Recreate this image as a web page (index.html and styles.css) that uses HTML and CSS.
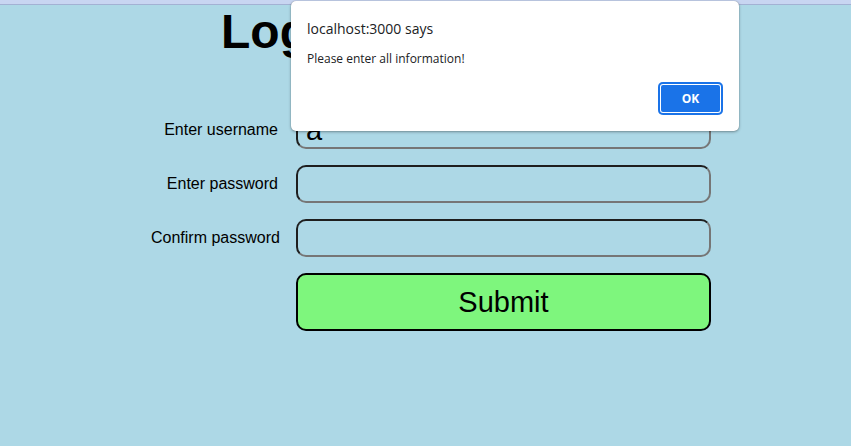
FILE: index.html
```html
<!DOCTYPE html>
<html>
<head>
<meta charset="utf-8">
<link rel="stylesheet" href="styles.css">
</head>
<body>
<div class="topstrip"></div>
<h1 class="title">Login</h1>
<form class="form">
  <label class="label" for="u">Enter username</label>
  <input class="field" id="u" type="text" value="a">
  <label class="label" for="p">Enter password</label>
  <input class="field" id="p" type="password">
  <label class="label" for="c">Confirm password</label>
  <input class="field" id="c" type="password">
  <span></span>
  <button class="submit" type="button">Submit</button>
</form>
<div class="dialog">
  <div class="dlg-title">localhost:3000 says</div>
  <div class="dlg-msg">Please enter all information!</div>
  <div class="dlg-actions"><span class="ok">OK</span></div>
</div>
</body>
</html>
```
FILE: styles.css
```css
html, body {
  margin: 0;
  padding: 0;
}
body {
  background: #add8e6;
  font-family: "Liberation Sans", Arial, sans-serif;
  width: 851px;
  height: 446px;
  overflow: hidden;
  position: relative;
}
.topstrip {
  height: 4px;
  background: #c8d5f1;
  border-bottom: 1px solid #a3b1d3;
}
.title {
  margin: 0;
  padding-left: 221px;
  font-size: 48px;
  line-height: 54px;
  font-weight: bold;
  color: #000;
}
.form {
  display: grid;
  grid-template-columns: 127px 415px;
  column-gap: 18px;
  row-gap: 16px;
  align-items: center;
  margin: 52px 0 0 151px;
}
.label {
  font-size: 16px;
  text-align: right;
  white-space: nowrap;
  color: #000;
}
.field {
  box-sizing: border-box;
  height: 38px;
  width: 415px;
  background: transparent;
  border: 2px solid;
  border-color: #1e1e1e #767676 #767676 #1e1e1e;
  border-radius: 10px;
  padding: 0 8px;
  font-family: "Liberation Sans", Arial, sans-serif;
  font-size: 29px;
  color: #000;
  outline: none;
}
.submit {
  box-sizing: border-box;
  height: 58px;
  width: 415px;
  background: #7ef67d;
  border: 2px solid #000;
  border-radius: 10px;
  font-family: "Liberation Sans", Arial, sans-serif;
  font-size: 29px;
  color: #000;
  padding: 0;
}
.dialog {
  position: absolute;
  left: 291px;
  top: 1px;
  width: 448px;
  height: 130px;
  box-sizing: border-box;
  background: #fff;
  border-radius: 5px;
  box-shadow: 0 1px 3px rgba(0,0,0,0.35), 0 0 1px rgba(0,0,0,0.35);
  padding: 18px 16px 0 16px;
  font-family: "Open Sans", "Noto Sans", sans-serif;
  color: #202124;
}
.dlg-title {
  font-size: 14px;
  line-height: 20px;
}
.dlg-msg {
  font-size: 12px;
  line-height: 16px;
  margin-top: 12px;
}
.dlg-actions {
  display: flex;
  justify-content: flex-end;
  margin-top: 15px;
}
.ok {
  display: flex;
  align-items: center;
  justify-content: center;
  width: 65px;
  height: 33px;
  box-sizing: border-box;
  border-radius: 5px;
  background: #1a73e8;
  box-shadow: inset 0 0 0 2px #1a73e8, inset 0 0 0 3px #fff;
  color: #fff;
  font-weight: bold;
  font-size: 12px;
}
```
